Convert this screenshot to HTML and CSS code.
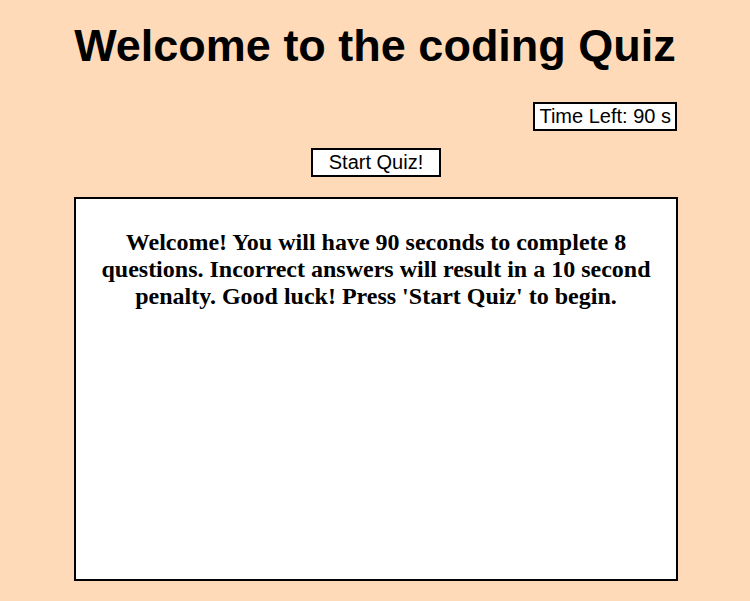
FILE: index.html
```html
<!DOCTYPE html>
<html>
<head>
<meta charset="utf-8">
<link rel="stylesheet" href="styles.css">
</head>
<body>
<header class="header">
  <h1 class="title">Welcome to the coding Quiz</h1>
</header>
<div class="wrap">
  <div class="timer-row">
    <div class="timer">Time Left: 90 s</div>
  </div>
  <div class="start-row">
    <button class="start">Start Quiz!</button>
  </div>
  <main class="quiz-box">
    <p class="intro">Welcome! You will have 90 seconds to complete 8 questions. Incorrect answers will result in a 10 second penalty. Good luck! Press 'Start Quiz' to begin.</p>
  </main>
</div>
</body>
</html>
```

FILE: styles.css
```css
html, body {
  margin: 0;
  padding: 0;
  background: #ffdab9;
}
body {
  font-family: "Liberation Sans", Arial, sans-serif;
  color: #000;
}
.header {
  display: flex;
  justify-content: center;
  padding-top: 18px;
}
.title {
  margin: 0;
  font-size: 45px;
  font-weight: bold;
  line-height: 56px;
}
.wrap {
  width: 604px;
  margin: 0 auto;
  padding-left: 2px;
  display: flex;
  flex-direction: column;
}
.timer-row {
  display: flex;
  justify-content: flex-end;
  margin-top: 28px;
  padding-right: 1px;
}
.timer {
  border: 2px solid #000;
  background: #fff;
  font-size: 20px;
  line-height: 25px;
  padding: 0 4px;
}
.start-row {
  display: flex;
  justify-content: center;
  margin-top: 17px;
}
.start {
  font-family: "Liberation Sans", Arial, sans-serif;
  font-size: 20px;
  line-height: 25px;
  height: 29px;
  width: 130px;
  padding: 0;
  border: 2px solid #000;
  background: #fff;
  color: #000;
}
.quiz-box {
  margin-top: 20px;
  height: 380px;
  border: 2px solid #000;
  background: #fff;
  padding: 0 20px;
}
.intro {
  margin: 30px 0 0;
  font-family: "Liberation Serif", "Times New Roman", serif;
  font-weight: bold;
  font-size: 24px;
  line-height: 27px;
  text-align: center;
}
```
